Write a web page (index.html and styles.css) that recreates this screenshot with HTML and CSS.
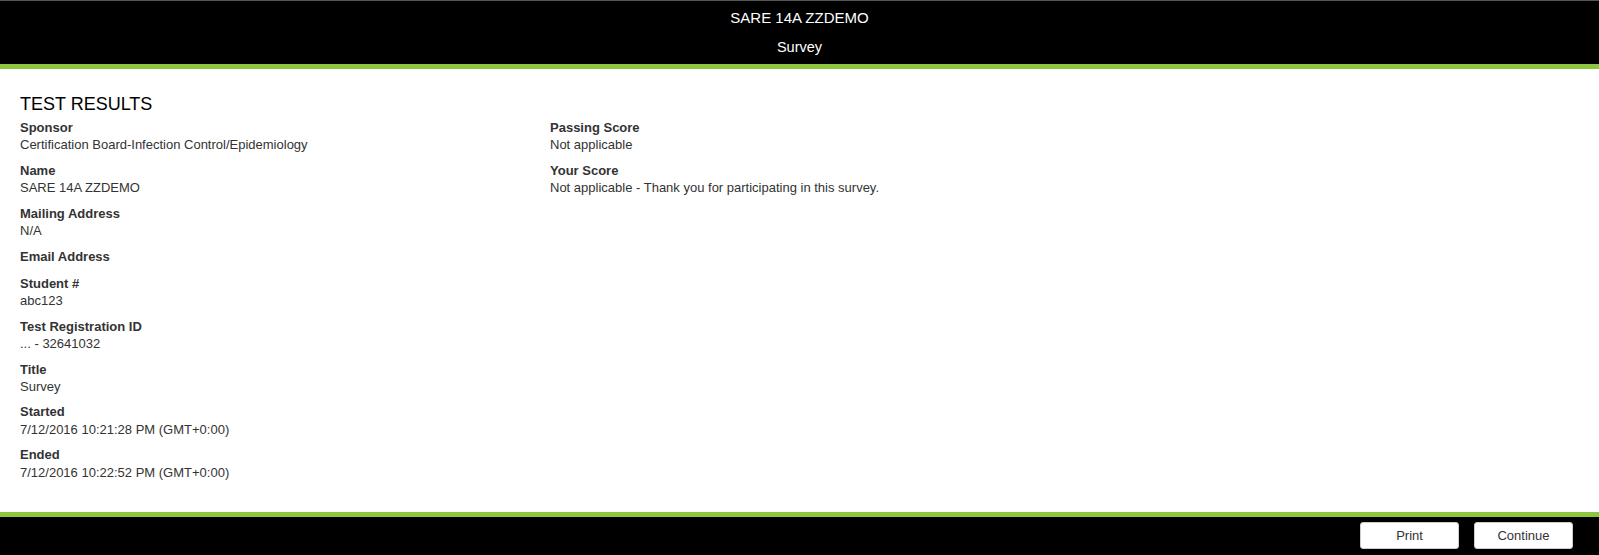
FILE: index.html
```html
<!DOCTYPE html>
<html lang="en">
<head>
<meta charset="utf-8">
<title>Test Results</title>
<link rel="stylesheet" href="styles.css">
</head>
<body>
<div class="page">
  <header class="top-bar">
    <div class="top-title">SARE 14A ZZDEMO</div>
    <div class="top-subtitle">Survey</div>
  </header>
  <div class="accent"></div>
  <main class="content">
    <h1 class="heading">TEST RESULTS</h1>
    <div class="columns">
      <div class="col">
        <div class="field"><div class="label">Sponsor</div><div class="value">Certification Board-Infection Control/Epidemiology</div></div>
        <div class="field"><div class="label">Name</div><div class="value">SARE 14A ZZDEMO</div></div>
        <div class="field"><div class="label">Mailing Address</div><div class="value">N/A</div></div>
        <div class="field"><div class="label">Email Address</div><div class="value empty"></div></div>
        <div class="field"><div class="label">Student #</div><div class="value">abc123</div></div>
        <div class="field"><div class="label">Test Registration ID</div><div class="value">... - 32641032</div></div>
        <div class="field"><div class="label">Title</div><div class="value">Survey</div></div>
        <div class="field"><div class="label">Started</div><div class="value">7/12/2016 10:21:28 PM (GMT+0:00)</div></div>
        <div class="field"><div class="label">Ended</div><div class="value">7/12/2016 10:22:52 PM (GMT+0:00)</div></div>
      </div>
      <div class="col">
        <div class="field"><div class="label">Passing Score</div><div class="value">Not applicable</div></div>
        <div class="field"><div class="label">Your Score</div><div class="value">Not applicable - Thank you for participating in this survey.</div></div>
      </div>
    </div>
  </main>
  <div class="accent"></div>
  <footer class="bottom-bar">
    <button class="btn" type="button">Print</button>
    <button class="btn" type="button">Continue</button>
  </footer>
</div>
</body>
</html>
```
FILE: styles.css
```css
* { box-sizing: border-box; }
html, body { margin: 0; padding: 0; }
body {
  font-family: "Liberation Sans", Arial, sans-serif;
  color: #333;
  background: #fff;
}
.page {
  display: flex;
  flex-direction: column;
  height: 100vh;
}
.top-bar {
  background: #000;
  color: #fff;
  border-top: 1px solid #555;
  padding: 6.5px 0 6.9px;
  text-align: center;
  display: flex;
  flex-direction: column;
  gap: 9.6px;
}
.top-title {
  font-size: 15px;
  line-height: 20px;
}
.top-subtitle {
  font-size: 14.5px;
  line-height: 20px;
}
.accent {
  height: 5px;
  background: #8dc63f;
  flex: none;
}
.content {
  flex: 1;
  padding: 24.7px 20px 0;
}
.heading {
  margin: 0 0 5.4px;
  font-size: 18px;
  line-height: 20px;
  font-weight: normal;
  color: #000;
}
.columns {
  display: grid;
  grid-template-columns: 530px 1fr;
}
.field {
  margin-bottom: 8px;
}
.label {
  font-size: 13px;
  line-height: 17.4px;
  font-weight: bold;
  color: #333;
}
.value {
  font-size: 13px;
  line-height: 17.4px;
  color: #333;
}
.value.empty {
  height: 2px;
}
.bottom-bar {
  background: #000;
  height: 38px;
  flex: none;
  display: flex;
  justify-content: flex-end;
  align-items: flex-start;
  gap: 15px;
  padding: 5px 26px 0 0;
}
.btn {
  width: 99px;
  height: 27px;
  background: #fff;
  border: 1px solid #ccc;
  border-radius: 3px;
  font-family: "Liberation Sans", Arial, sans-serif;
  font-size: 13px;
  color: #333;
  padding: 0;
  cursor: pointer;
}
```
